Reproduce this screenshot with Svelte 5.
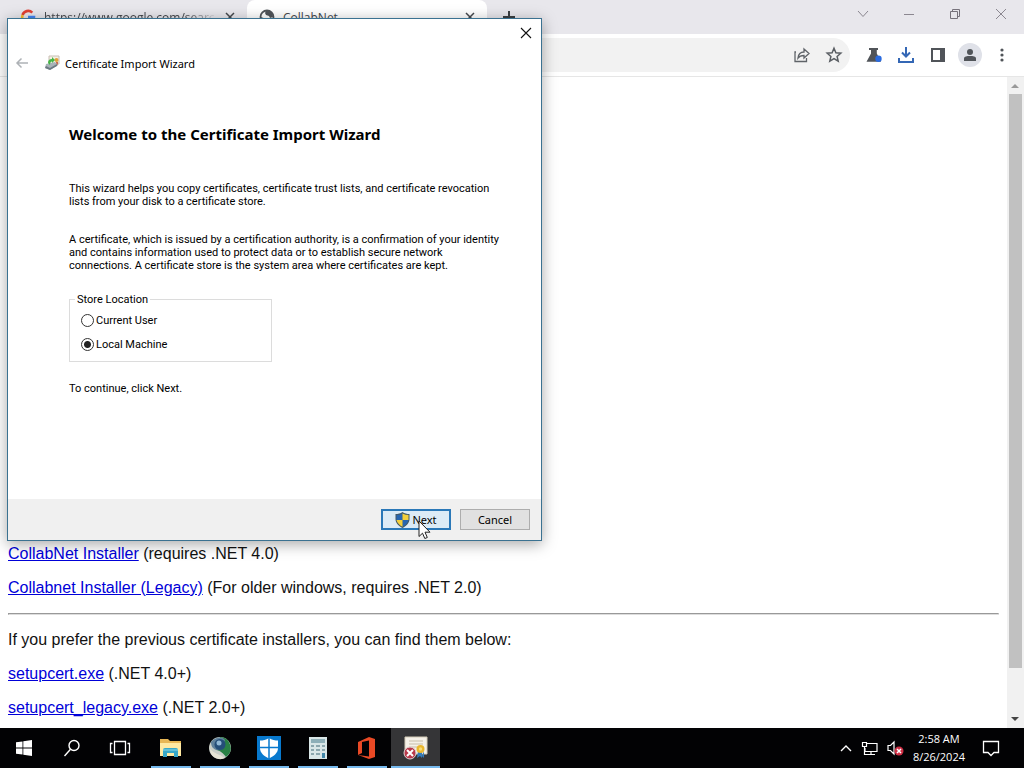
<script>
  let store = $state('machine');
  const links = [
    { name: 'CollabNet Installer', note: '(requires .NET 4.0)' },
    { name: 'Collabnet Installer (Legacy)', note: '(For older windows, requires .NET 2.0)' }
  ];
  const older = [
    { name: 'setupcert.exe', note: '(.NET 4.0+)' },
    { name: 'setupcert_legacy.exe', note: '(.NET 2.0+)' }
  ];
</script>

<div class="desktop">
  <header class="tabs">
    <div class="tab first">
      <svg width="16" height="16" viewBox="0 0 16 16" fill="none" stroke-width="2.6"><path d="M2.5 6A6 6 0 0 1 12.3 3.6" stroke="#e34133" /><path d="M2.5 6A6 6 0 0 0 3 11" stroke="#f9bb2d" /><path d="M3 11a6 6 0 0 0 9 1.500" stroke="#34a353" /><path d="M12 12.500a6 6 0 0 0 2-4.500H8" stroke="#4285f4" /></svg>
      <span class="name fade">https://www.google.com/searc</span>
      <button class="plain" aria-label="Close first tab"><svg width="10" height="10" viewBox="0 0 10 10" stroke="#45484d" stroke-width="1.5"><path d="M1 1l8 8M9 1L1 9" /></svg></button>
    </div>
    <div class="tab current">
      <svg width="16" height="16" viewBox="0 0 16 16"><circle cx="8" cy="8" r="6.500" fill="#fff" stroke="#505459" stroke-width="1.800" /><path d="M7 2c4-1 7 2 7 6l-3 1-1-2-3-1-1-2z" fill="#505459" /><path d="M2 8l5 2 1 4C4 14 2 11 2 8z" fill="#505459" /></svg>
      <span class="name">CollabNet</span>
      <button class="plain" aria-label="Close second tab"><svg width="10" height="10" viewBox="0 0 10 10" stroke="#45484d" stroke-width="1.5"><path d="M1 1l8 8M9 1L1 9" /></svg></button>
    </div>
    <button class="plain add" aria-label="New tab"><svg width="12" height="12" viewBox="0 0 12 12" stroke="#3c4043" stroke-width="2"><path d="M6 0v12M0 6h12" /></svg></button>
    <div class="captions">
      <button class="plain" aria-label="Search tabs"><svg width="12" height="12" viewBox="0 0 12 12" fill="none" stroke="#8b8790"><path d="M1 3l5 5.500L11 3" /></svg></button>
      <button class="plain" aria-label="Minimize"><svg width="12" height="12" viewBox="0 0 12 12" stroke="#8b8790"><path d="M1 6.500h10" /></svg></button>
      <button class="plain" aria-label="Restore"><svg width="12" height="12" viewBox="0 0 12 12" fill="none" stroke="#77737c"><path d="M1.500 3.500h7v7h-7zM3.500 3.500v-2h7v7h-2" /></svg></button>
      <button class="plain" aria-label="Close browser"><svg width="12" height="12" viewBox="0 0 12 12" stroke="#8b8790"><path d="M1 1l10 10M11 1L1 11" /></svg></button>
    </div>
  </header>

  <nav class="toolbar">
    <div class="address">
      <button class="plain" aria-label="Share"><svg width="18" height="18" viewBox="0 0 18 18" fill="none" stroke="#5f6368" stroke-width="1.300"><path d="M3 6H2v9.500h11.500V12M5 12c.5-4.500 3-6 6-6V3l5 4.500-5 4.500V9.500C8.500 9.500 6.500 10 5 12z" /></svg></button>
      <button class="plain" aria-label="Bookmark"><svg width="18" height="18" viewBox="0 0 18 18" fill="none" stroke="#5a5e63" stroke-width="1.500"><path d="M9 2.300l1.900 4.500 4.900.4-3.700 3.200 1.100 4.800L9 12.600l-4.200 2.600 1.100-4.800-3.700-3.200 4.900-.4z" /></svg></button>
    </div>
    <div class="actions">
      <button class="plain" aria-label="Experiments"><svg width="18" height="18" viewBox="0 0 18 18"><path d="M4 2h9v2h-1.200v3.500L16 15.800H1.500L6 7.500V4H4z" fill="#505459" /><circle cx="13.500" cy="12.800" r="3.200" fill="#2a6be0" /></svg></button>
      <button class="plain" aria-label="Downloads"><svg width="18" height="18" viewBox="0 0 18 18" fill="none" stroke="#3467b5" stroke-width="2"><path d="M9 1v9M5 6.500l4 4 4-4M2 12v4h14v-4" /></svg></button>
      <button class="plain" aria-label="Side panel"><svg width="18" height="18" viewBox="0 0 18 18"><path d="M2 2h14v14H2zM4 4v10h7V4z" fill="#505459" fill-rule="evenodd" /></svg></button>
      <button class="plain profile" aria-label="Profile"><svg width="14" height="14" viewBox="0 0 14 14" fill="#505459"><circle cx="7" cy="4" r="3" /><path d="M1 13v-2.500C1 8.500 4 8 7 8s6 .5 6 2.500V13z" /></svg></button>
      <button class="plain" aria-label="Browser menu"><svg width="18" height="18" viewBox="0 0 18 18" fill="#505459"><circle cx="9" cy="4" r="1.600" /><circle cx="9" cy="9" r="1.600" /><circle cx="9" cy="14" r="1.600" /></svg></button>
    </div>
  </nav>

  <div class="view">
    <main>
      {#each links as l}
        <p><a href="#top">{l.name}</a> {l.note}</p>
      {/each}
      <hr />
      <p>If you prefer the previous certificate installers, you can find them below:</p>
      {#each older as l}
        <p><a href="#top">{l.name}</a> {l.note}</p>
      {/each}
    </main>
    <div class="scroll">
      <svg width="16" height="17" viewBox="0 0 16 17"><path d="M4 11l4-4 4 4z" fill="#999" /></svg>
      <div class="track"><div class="thumb"></div></div>
      <svg width="16" height="17" viewBox="0 0 16 17"><path d="M4 6l4 4 4-4z" fill="#444" /></svg>
    </div>
  </div>

  <footer class="taskbar">
    <button class="task" aria-label="Start"><svg width="16" height="16" viewBox="0 0 16 16" fill="#fff"><path d="M0 2.300l6.500-.9v6.200H0zM7.300 1.300L16 0v7.600H7.300zM0 8.400h6.500v6.200L0 13.700zM7.300 8.400H16V16l-8.700-1.200z" /></svg></button>
    <button class="task" aria-label="Search"><svg width="18" height="18" viewBox="0 0 18 18" fill="none" stroke="#fff" stroke-width="1.400"><circle cx="11" cy="6.500" r="5" /><path d="M7.500 10.200L1.500 17" /></svg></button>
    <button class="task wide" aria-label="Task view"><svg width="22" height="16" viewBox="0 0 22 16" fill="none" stroke="#fff" stroke-width="1.300"><path d="M5.500 1.500h11v13h-11zM3.500 3.500h-2v9h2M18.500 3.500h2v9h-2" /></svg></button>
    <button class="task open" aria-label="File Explorer"><svg width="24" height="24" viewBox="0 0 24 24"><path d="M1 3h8l2 2h11v15H1z" fill="#e8b755" /><path d="M1 7h21v13H1z" fill="#ffe9a2" /><path d="M4 14q0-2 2-2h11q2 0 2 2v7h-4v-4H8v4H4z" fill="#38a8c8" /><path d="M4 14h15" stroke="#8bd8e8" /></svg></button>
    <button class="task open" aria-label="Installer"><svg width="24" height="24" viewBox="0 0 24 24"><circle cx="12" cy="12" r="11" fill="#c9cec7" /><path d="M12 1a11 11 0 0 1 6 20c-2-3-6-7-10-7z" fill="#298044" /><path d="M3 6C7 1 14 0 17 4l-4 10C7 15 3 12 3 6z" fill="#60819b" /><circle cx="12" cy="8.500" r="5.500" fill="#254e79" /><circle cx="11" cy="7" r="2.500" fill="#91b8d5" /><path d="M2 13c5 5 9 5 15 9-5 3-15 0-15-9z" fill="#e6e3d4" /></svg></button>
    <button class="task open" aria-label="Security"><svg width="24" height="24" viewBox="0 0 24 24"><path d="M0 0h24v24H0z" fill="#0879ce" /><path d="M12 2c3 2 6 2.500 9 2.500V12c0 5-4 8-9 10.500C7 20 3 17 3 12V4.500c3 0 6-.5 9-2.500z" fill="#fff" /><path d="M12 1v22M2 11.500h20" stroke="#0879ce" stroke-width="1.500" /></svg></button>
    <button class="task open" aria-label="Calculator"><svg width="18" height="24" viewBox="0 0 18 24"><path d="M0 1h18v22H0z" fill="#d9e6e7" /><path d="M2 3h14v4H2z" fill="#8eafb8" /><path d="M2 9h3v2H2zm5 0h4v2H7zm6 0h3v2h-3zM2 13h3v2H2zm5 0h4v2H7zm6 0h3v2h-3zM2 17h3v2H2zm5 0h4v2H7z" fill="#8ca7ae" /><path d="M13 17h3v5h-3z" fill="#4287a9" /></svg></button>
    <button class="task open" aria-label="Office"><svg width="20" height="24" viewBox="0 0 20 24"><path d="M1 6L12 1l6 2v18l-6 2L1 19l11 1.500V4.500L5 6v11l-4 2z" fill="#e94925" /></svg></button>
    <button class="task open active" aria-label="Certificate Import Wizard task"><svg width="26" height="24" viewBox="0 0 26 24"><path d="M2 1h22v17H2z" fill="#f5f1e8" stroke="#d4ccb8" /><path d="M6 5h14M6 8h14M6 11h8" stroke="#c7bda9" /><path d="M15 15l-1 7 3-2 2 2v-6zm6 0v7l-2-2" fill="#347bba" /><circle cx="17.500" cy="13" r="4" fill="#eab72e" /><circle cx="17.500" cy="13" r="1.700" fill="#f9dc76" /><circle cx="7" cy="17" r="6" fill="#b9394a" stroke="#ded5d5" /><path d="M4 14l6 6M10 14l-6 6" stroke="#fff" stroke-width="2" /></svg></button>
    <div class="tray">
      <button class="plain" aria-label="Hidden icons"><svg width="12" height="8" viewBox="0 0 12 8" fill="none" stroke="#fff" stroke-width="1.400"><path d="M1 7l5-5 5 5" /></svg></button>
      <button class="plain" aria-label="Network"><svg width="17" height="15" viewBox="0 0 17 15" fill="none" stroke="#fff" stroke-width="1.200"><path d="M6 2.500h10v8H4V7M10 10.500v3M6 13.500h8M1.500 1.500h4v4h-4zM3.500 5.500v8H6" /></svg></button>
      <button class="plain" aria-label="Volume muted"><svg width="17" height="16" viewBox="0 0 17 16"><path d="M1 5.500h2.500L7 2v12l-3.500-3.500H1z" fill="none" stroke="#fff" stroke-width="1.200" /><circle cx="12" cy="11" r="4.500" fill="#cf2f45" /><path d="M10 9l4 4M14 9l-4 4" stroke="#fff" stroke-width="1.500" /></svg></button>
      <div class="clock"><span>2:58 AM</span><span>8/26/2024</span></div>
      <button class="plain notes" aria-label="Notifications"><svg width="18" height="17" viewBox="0 0 18 17" fill="none" stroke="#fff" stroke-width="1.300"><path d="M1.500 1.500h15v11h-4.500L9 15.500 6 12.500H1.500z" /></svg></button>
    </div>
  </footer>

  <section class="dialog" role="dialog" aria-labelledby="wizard-name">
    <div class="close"><button class="plain" aria-label="Close wizard"><svg width="12" height="12" viewBox="0 0 12 12" stroke="#111" stroke-width="1.100"><path d="M1 1l10 10M11 1L1 11" /></svg></button></div>
    <div class="title">
      <button class="plain" aria-label="Back"><svg width="14" height="12" viewBox="0 0 14 12" fill="none" stroke="#aeb2b6" stroke-width="1.500"><path d="M13 6H2M6.500 1.500L2 6l4.500 4.500" /></svg></button>
      <svg width="16" height="16" viewBox="0 0 16 16"><path d="M5 1h10v8H5z" fill="#f5efe4" stroke="#c8bfb4" /><circle cx="12.500" cy="5" r="2" fill="#dfa13c" /><path d="M12 7v4l2-1V7z" fill="#c86a52" /><path d="M2 9l9-2 3 3-8 5-5-2z" fill="#a9b3b9" /><path d="M2 11l4 2 7-4v2l-7 4-5-2z" fill="#6d7a83" /><path d="M4 8q0-4 4-4V2l3 3-3 3V6.500Q6 6.500 6 10z" fill="#45b646" /></svg>
      <span id="wizard-name">Certificate Import Wizard</span>
    </div>
    <div class="body">
      <h1>Welcome to the Certificate Import Wizard</h1>
      <p>This wizard helps you copy certificates, certificate trust lists, and certificate revocation<br />lists from your disk to a certificate store.</p>
      <p class="about">A certificate, which is issued by a certification authority, is a confirmation of your identity<br />and contains information used to protect data or to establish secure network<br />connections. A certificate store is the system area where certificates are kept.</p>
      <fieldset>
        <legend>Store Location</legend>
        <label><input type="radio" name="store" value="user" bind:group={store} />Current User</label>
        <label><input type="radio" name="store" value="machine" bind:group={store} />Local Machine</label>
      </fieldset>
      <p class="hint">To continue, click Next.</p>
    </div>
    <div class="buttons">
      <button class="next"><svg width="15" height="16" viewBox="0 0 15 16"><path d="M7.500 0C9.500 1.500 12 2 14.500 2v5c0 4-3 7-7 9-4-2-7-5-7-9V2C3 2 5.500 1.500 7.500 0z" fill="#445a66" /><path d="M7.500 1.500V8h-6V3c2 0 4-.5 6-1.500zM7.500 8h6c-.5 3-3 5-6 6.800z" fill="#2766b1" /><path d="M7.500 1.500c2 1 4 1.500 6 1.500v5h-6zM1.500 8h6v6.800C4.500 13 2 11 1.500 8z" fill="#f3cf3c" /></svg>Next</button>
      <button>Cancel</button>
    </div>
    <svg class="pointer" width="13" height="20" viewBox="0 0 13 20"><path d="M1 1v15.500l3.500-3.300 2.300 5.300 2.500-1-2.300-5.300h5z" fill="#fff" stroke="#222" /></svg>
  </section>
</div>

<style>
  .desktop { position: relative; min-height: 100vh; display: grid; grid-template-rows: 34px 43px 1fr 40px; overflow: hidden; background: #fff; font-family: "Open Sans", sans-serif; }
  .plain { display: flex; align-items: center; justify-content: center; padding: 0; border: 0; background: none; }
  svg { display: block; flex: none; }

  .tabs { display: flex; align-items: flex-start; background: #e8e7ec; font: 12px "Open Sans", sans-serif; color: #45484d; }
  .tab { display: flex; align-items: center; gap: 8px; width: 240px; height: 34px; padding: 0 12px; box-sizing: border-box; }
  .first { margin-left: 7px; padding-left: 13px; }
  .current { background: #fff; border-radius: 8px 8px 0 0; }
  .name { flex: 1; white-space: nowrap; }
  .fade { mask-image: linear-gradient(to right, #000 82%, transparent); }
  .add { width: 44px; height: 34px; }
  .captions { display: flex; margin-left: auto; }
  .captions button { width: 46px; height: 28px; }

  .toolbar { display: flex; align-items: center; gap: 12px; background: #fff; border-bottom: 1px solid #e6e6e6; }
  .address { flex: 1; display: flex; justify-content: flex-end; align-items: center; gap: 14px; height: 34px; margin-left: 120px; padding-right: 7px; border-radius: 17px; background: #f2f2f2; }
  .actions { display: flex; align-items: center; gap: 8px; padding-right: 10px; }
  .actions button { width: 24px; height: 24px; }
  .actions .profile { border-radius: 50%; background: #dfe1e8; }

  .view { display: flex; }
  main { flex: 1; display: flex; flex-direction: column; justify-content: flex-end; gap: 16px; padding: 0 8px 11px; font: 16px/18px "Liberation Sans", Arial, sans-serif; color: #111; }
  main p { margin: 0; }
  main a { color: #0000d8; }
  hr { width: 100%; margin: 0; border: 1px solid; border-color: #999 #ddd #ddd #999; box-sizing: border-box; }
  .scroll { display: flex; flex-direction: column; width: 17px; background: #f1f1f1; }
  .track { flex: 1; padding: 0 2px; }
  .thumb { height: 93%; background: #c1c1c1; }

  .taskbar { display: flex; background: #020204; color: #fff; }
  .task { display: flex; align-items: center; justify-content: center; width: 48px; padding: 0; border: 0; background: none; }
  .wide { width: 50px; padding-right: 2px; }
  .open { position: relative; width: 49px; }
  .open::after { content: ""; position: absolute; left: 5px; right: 4px; bottom: 0; height: 2px; background: #76b9ed; }
  .active { background: #353537; }
  .active::after { left: 0; right: 0; }
  .tray { display: flex; align-items: center; gap: 9px; margin-left: auto; padding-right: 24px; }
  .clock { display: flex; flex-direction: column; align-items: center; font: 11px/18px "Open Sans", sans-serif; }
  .notes { margin-left: 8px; }

  .dialog { position: absolute; left: 7px; top: 18px; width: 535px; box-sizing: border-box; border: 1px solid #3b7291; background: #fff; color: #000; box-shadow: 0 3px 14px rgba(0, 0, 0, 0.35); }
  .close { display: flex; justify-content: flex-end; height: 28px; }
  .close button { width: 30px; }
  .title { display: flex; align-items: center; gap: 5px; height: 32px; padding-left: 7px; font: 11px "Noto Sans", sans-serif; }
  .title > button { margin-right: 10px; }
  .body { padding: 44px 40px 0 61px; height: 376px; font: 11px/13px Roboto, Tahoma, sans-serif; white-space: nowrap; }
  h1 { margin: 0 0 37px; font: bold 15px/22px "Noto Sans", sans-serif; }
  .body p { margin: 0; }
  .body .about { margin-top: 25px; }
  fieldset { width: 203px; box-sizing: border-box; margin: 21px 0 20px; padding: 2px 11px 5px; border: 1px solid #dcdcdc; }
  legend { margin-left: -6px; padding: 0 2px; }
  label { display: flex; align-items: center; gap: 2px; height: 24px; }
  input { appearance: none; width: 13px; height: 13px; margin: 0; border: 1px solid #333; border-radius: 50%; background: #fff; }
  input:checked { background: radial-gradient(circle, #222 3px, #fff 4px); }
  .buttons { display: flex; justify-content: flex-end; gap: 9px; padding: 10px 11px; background: #f0f0f0; }
  .buttons button { display: flex; align-items: center; justify-content: center; gap: 2px; width: 70px; height: 21px; padding: 0; border: 1px solid #adadad; background: #e1e1e1; font: 11px "Noto Sans", sans-serif; color: #000; }
  .buttons .next { border: 2px solid #2a78b8; background: #dcebf6; }
  .pointer { position: absolute; left: 410px; top: 501px; }
</style>
